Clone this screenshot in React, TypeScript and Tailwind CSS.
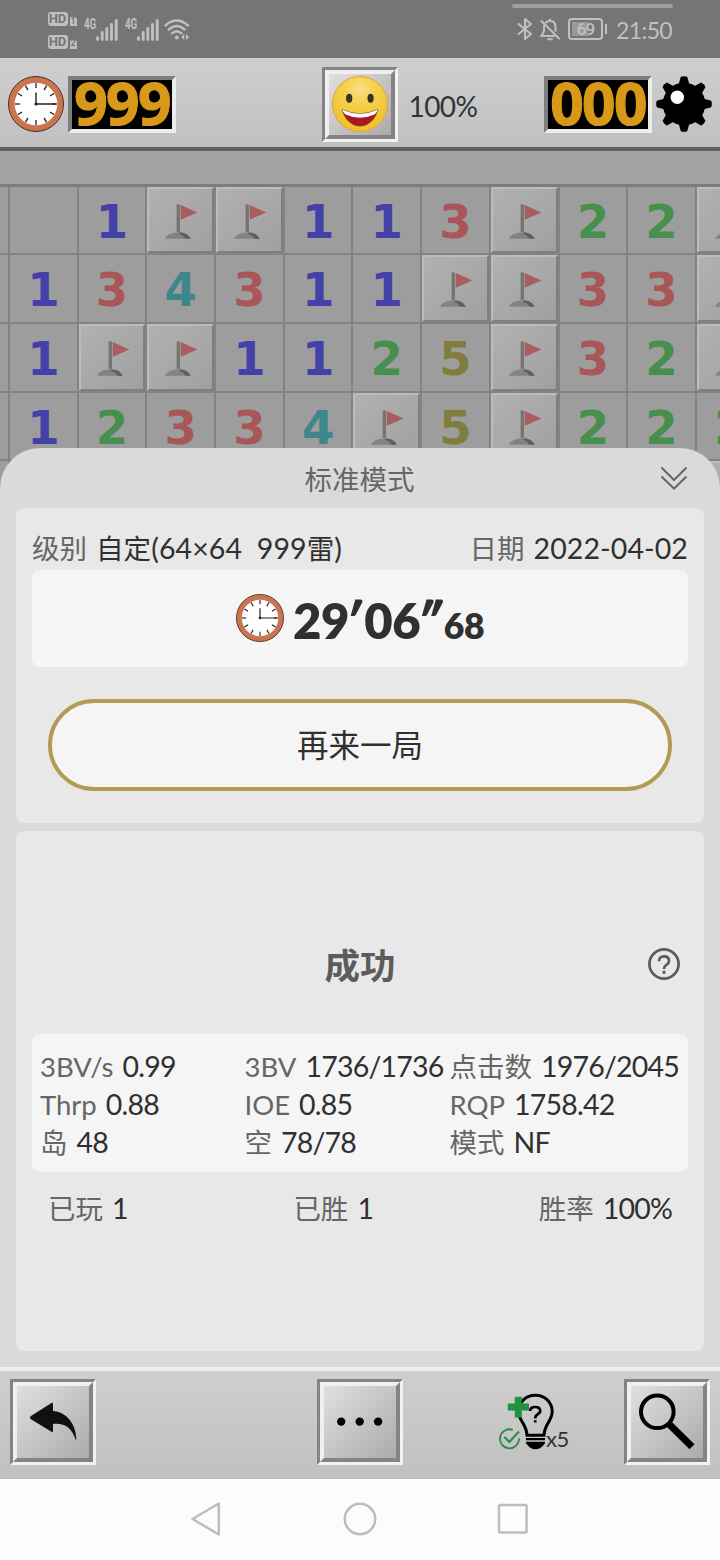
import type { ReactNode } from "react";

type Cell = "" | "F" | "1" | "2" | "3" | "4" | "5";

const BOARD: Cell[][] = [
  ["", "", "1", "F", "F", "1", "1", "3", "F", "2", "2", "F"],
  ["", "1", "3", "4", "3", "1", "1", "F", "F", "3", "3", "F"],
  ["", "1", "F", "F", "1", "1", "2", "5", "F", "3", "2", "F"],
  ["", "1", "2", "3", "3", "4", "F", "5", "F", "2", "2", "2"],
  ["", "", "", "", "", "", "", "", "", "", "", "F"],
];

const DIGIT_COLOR: Record<string, string> = {
  "1": "text-[#4340a8]",
  "2": "text-[#468f4c]",
  "3": "text-[#a85658]",
  "4": "text-[#3f858c]",
  "5": "text-[#807d3e]",
};

const STATS = [
  ["3BV/s", "0.99"], ["3BV", "1736/1736"], ["点击数", "1976/2045"],
  ["Thrp", "0.88"], ["IOE", "0.85"], ["RQP", "1758.42"],
  ["岛", "48"], ["空", "78/78"], ["模式", "NF"],
];

function Clock({ className }: { className: string }) {
  return (
    <svg viewBox="0 0 56 56" className={className}>
      <circle cx="28" cy="28" r="27.5" fill="#cb7450" stroke="#4a2f28" strokeWidth="1" />
      <circle cx="28" cy="28" r="21.3" fill="#fff" />
      {[0, 1, 2, 3, 4, 5, 6, 7, 8, 9, 10, 11].map((n) => (
        <path key={n} d="M28 7v5" stroke="#222" strokeWidth="1.3" transform={`rotate(${n * 30} 28 28)`} />
      ))}
      <path d="M28 16.5V28H48" fill="none" stroke="#222" strokeWidth="1.4" />
      <circle cx="28" cy="28" r="1.6" fill="#222" />
    </svg>
  );
}

function Mine() {
  return (
    <svg viewBox="0 0 56 56" className="h-14 w-14">
      <circle cx="28" cy="28" r="21.3" />
      {[0, 1, 2, 3, 4, 5, 6, 7].map((n) => (
        <path key={n} d="M22.5 9L24.8 0.8Q28 -0.4 31.2 0.8L33.5 9Z" transform={`rotate(${n * 45} 28 28)`} />
      ))}
      <circle cx="21.3" cy="21.3" r="6.7" fill="#fff" />
    </svg>
  );
}

function Counter({ value }: { value: string }) {
  return (
    <div className="h-[57px] w-[108px] border-4 border-t-[#7e7e7e] border-r-[#ececec] border-b-[#ececec] border-l-[#7e7e7e] bg-black text-center">
      <span className="-mt-[17.5px] block font-['Noto_Sans'] text-[58.5px] leading-[80px] font-bold tracking-[-1.6px] text-[#d8981a] [-webkit-text-stroke:1.2px_#d8981a]">{value}</span>
    </div>
  );
}

function BevelButton({ className, children }: { className: string; children: ReactNode }) {
  return (
    <button className={`${className} shrink-0 border-[3px] border-t-[#848484] border-r-[#f2f2f2] border-b-[#f2f2f2] border-l-[#848484]`}>
      <span className="flex h-full w-full items-center justify-center border-4 border-t-[#f0f0f0] border-r-[#848484] border-b-[#848484] border-l-[#f0f0f0] bg-linear-to-br from-[#e0e0e0] to-[#ababab]">
        {children}
      </span>
    </button>
  );
}

function Smiley() {
  return (
    <svg viewBox="0 0 58 58" className="h-[58px] w-[58px] shrink-0">
      <defs>
        <radialGradient id="face" cx="50%" cy="24%" r="70%">
          <stop offset="0" stopColor="#fae08c" />
          <stop offset="0.4" stopColor="#f4d04a" />
          <stop offset="1" stopColor="#eec22c" />
        </radialGradient>
      </defs>
      <circle cx="29" cy="29" r="27.6" fill="url(#face)" stroke="#e2a244" strokeWidth="1" />
      <ellipse cx="18.2" cy="23.2" rx="3.1" ry="4.5" fill="#3a3320" />
      <ellipse cx="39.6" cy="23.2" rx="3.1" ry="4.5" fill="#3a3320" />
      <path d="M11 34.5Q29 43 47 34.5C44 45 37 51 29 51S14 45 11 34.5Z" fill="#ad1524" stroke="#6b4a1c" strokeWidth="0.8" />
      <path d="M11 34.5Q29 43 47 34.5Q46 37.5 43.6 39.5Q29 46 14.5 39.5Q12 37.5 11 34.5Z" fill="#fff" />
    </svg>
  );
}

function Flag() {
  return (
    <svg viewBox="0 0 66.7 66.7" className="h-[66.7px] w-[66.7px] shrink-0">
      <path d="M33.7 18L50.4 25.5L33.7 32.7Z" fill="#a85d5e" />
      <path d="M18.2 51.8C20 46.5 28 45.3 33 45.6C38 45.3 42 48 43.7 51.8Z" fill="#83837f" />
      <path d="M32 45.5C38 45.3 42 48 43.7 51.8H38.5Q36 48 32 46.5Z" fill="#5f5f5d" />
      <path d="M29.7 17.5H32.8V44.8H29.7Z" fill="#696966" />
      <path d="M31 18V44.6" stroke="#85857f" strokeWidth="0.8" />
    </svg>
  );
}

function Tile({ cell }: { cell: Cell }) {
  return (
    <div className="flex overflow-hidden border-r-2 border-b-2 border-[#838383]">
      {cell === "F" ? (
        <div className="flex h-full w-full items-center justify-center overflow-hidden border-t-[2.5px] border-r-2 border-b-2 border-l-[2.5px] border-t-[#bcbcbc] border-r-[#7f7f7f] border-b-[#7f7f7f] border-l-[#bcbcbc] bg-linear-to-br from-[#b1b1b1] to-[#a0a0a0]">
          <Flag />
        </div>
      ) : (
        <span className={`w-full pt-[2px] text-center font-['DejaVu_Sans'] text-[46.6px] leading-[66px] font-bold ${DIGIT_COLOR[cell] ?? ""}`}>{cell}</span>
      )}
    </div>
  );
}

function Label({ children }: { children: ReactNode }) {
  return <span className="mr-[9px] text-[27.5px] text-[#666]">{children}</span>;
}

function Value({ children, wide }: { children: ReactNode; wide?: boolean }) {
  return <span className={`text-[28.5px] text-[#303030] ${wide ? "tracking-[0.1px]" : "tracking-[-0.8px]"}`}>{children}</span>;
}

function HdBadge({ slot }: { slot: string }) {
  return (
    <div className="flex h-[14px] items-end gap-[2px]">
      <span className="flex h-[14px] w-5 items-center justify-center rounded-[3px] bg-[#c0c0c0] font-['Roboto'] text-[13px] font-bold text-[#757575]">HD</span>
      <span className="flex h-[9px] w-[7px] items-center justify-center rounded-tr-[3px] bg-[#c0c0c0] font-['Roboto'] text-[9px] font-bold text-[#757575]">{slot}</span>
    </div>
  );
}

function Signal() {
  return (
    <div className="flex h-[22px] w-[41px]">
      <span className="h-3 w-3 origin-left scale-x-70 font-['Roboto'] text-[14px] leading-[10px] font-bold">4G</span>
      <svg viewBox="0 0 22 22" className="h-[22px] w-[22px]">
        <path d="M1.5 20.5V18.8M6.2 20.5V13.5M10.8 20.5V9.5M15.5 20.5V5.5M20.2 20.5V1.5" stroke="currentColor" strokeWidth="2.9" strokeLinecap="round" />
      </svg>
    </div>
  );
}

function StatusBar() {
  return (
    <div className="relative flex h-[58px] shrink-0 bg-[#757575] text-[#c0c0c0]">
      <div className="flex w-full items-start justify-between pr-[47px] pl-[47.5px]">
        <div className="flex pt-[12px]">
          <div className="flex w-[36.5px] flex-col gap-[8.5px]">
            <HdBadge slot="1" />
            <HdBadge slot="2" />
          </div>
          <div className="flex pt-[7px]">
            <Signal />
            <Signal />
            <svg viewBox="0 0 26 22" className="-ml-[2px] h-[22px] w-[26px]" fill="none" stroke="currentColor" strokeWidth="2.4" strokeLinecap="round">
              <path d="M1.5 6.5Q12.5 -3.5 24 6.5" />
              <path d="M4.8 10.5Q12.8 3.5 20.6 10.5" />
              <path d="M8 14.3Q12.8 10 17.5 14.3" />
              <circle cx="12.8" cy="18.5" r="2" fill="currentColor" stroke="none" />
              <path d="M20.3 15V21L17 18ZM22 15V21L25.3 18Z" fill="currentColor" stroke="none" />
            </svg>
          </div>
        </div>
        <div className="flex h-[41px] items-end">
          <svg viewBox="0 0 16 24" className="mr-[7px] h-6 w-4" fill="none" stroke="currentColor" strokeWidth="2.1" strokeLinejoin="round" strokeLinecap="round">
            <path d="M1.5 7L14 17L8 22V2L14 7L1.5 17" />
          </svg>
          <svg viewBox="0 0 20 24" className="mr-[8px] h-6 w-5" fill="none" stroke="currentColor" strokeWidth="2" strokeLinecap="round">
            <path d="M1.5 4L19 21.5M6 5.5Q7.5 3.8 10 4M10 2.5V4Q15.5 4 15.5 10V14M4 8.5V14L1.5 19H14M8 22.2H12" />
          </svg>
          <div className="mb-[1px] flex items-center gap-[2px]">
            <div className="flex h-[22px] w-[35px] items-center justify-center rounded-[4px] border-2 border-[#c0c0c0] p-[2px]">
              <span className="flex h-full w-full items-center justify-center bg-linear-to-r from-[#999] from-60% to-transparent to-60% pt-px font-['Roboto'] text-[17px] font-medium tracking-[-1px]">69</span>
            </div>
            <div className="h-[10px] w-[2px] bg-[#c0c0c0]" />
          </div>
          <span className="mb-[-1px] ml-[9px] w-[57px] font-['Lato'] text-[23px] leading-[24px] tracking-[-0.6px]">21:50</span>
        </div>
      </div>
      <div className="absolute top-1 right-[47px] h-1 w-[161px] rounded-full bg-[#9f9f9f]" />
    </div>
  );
}

function GameHeader() {
  return (
    <div className="flex h-[93px] shrink-0 items-center border-b-4 border-[#606060] bg-linear-to-b from-[#cfcfcf] to-[#c0c0c0] px-2 pt-[3px]">
      <Clock className="mr-1 h-14 w-14" />
      <Counter value="999" />
      <BevelButton className="ml-[146px] h-[75px] w-[75.5px]"><Smiley /></BevelButton>
      <span className="ml-[11px] flex-1 pt-[3px] font-['Lato'] text-[28px] tracking-[-0.6px] text-[#333]">100%</span>
      <Counter value="000" />
      <div className="ml-1"><Mine /></div>
    </div>
  );
}

// taller than its slot: it keeps going under the sheet's rounded corners
function Board() {
  return (
    <div className="-mb-12 h-[345px] shrink-0 overflow-hidden bg-[#9d9d9d]">
      <div className="h-[35.7px] border-b-[3.5px] border-[#7c7c7c] bg-[#a3a3a3]" />
      <div className="grid auto-rows-[68.7px] grid-cols-[10px_repeat(11,68.7px)]">
        {BOARD.flatMap((row, y) => row.map((cell, x) => <Tile key={`${y}-${x}`} cell={cell} />))}
      </div>
    </div>
  );
}

function ResultSheet() {
  return (
    <div className="relative z-10 flex h-[919px] shrink-0 flex-col rounded-t-[40px] bg-[#dadada] px-4">
      <div className="flex h-[60px] items-center justify-center text-[27.5px] text-[#666]">
        <span className="flex-1 pt-[3px] pl-[39px] text-center">标准模式</span>
        <svg viewBox="0 0 28 24" className="mr-4 -ml-1 h-6 w-7" fill="none" stroke="#666" strokeWidth="2">
          <path d="M1.5 1.5L14 14L26.5 1.5M1.5 10.5L14 22.5L26.5 10.5" />
        </svg>
      </div>

      <div className="h-[315px] rounded-lg bg-[#e8e8e8] px-4">
        <div className="flex h-[62px] items-end justify-between whitespace-pre">
          <div className="flex items-baseline"><Label>级别</Label><Value wide><span className="text-[27.5px]">自定</span>(64×64  999<span className="text-[27.5px]">雷</span>)</Value></div>
          <div className="flex items-baseline"><Label>日期</Label><Value wide>2022-04-02</Value></div>
        </div>
        <div className="flex h-[97px] items-center justify-center rounded-lg bg-[#f5f5f5] text-[#303030]">
          <Clock className="mr-[9px] mb-px h-12 w-12" />
          <div className="flex items-baseline pt-[5px] font-['Lato'] text-[49px] font-extrabold tracking-[-0.5px]">
            <span>29</span><span className="-ml-[4px] mr-[4px] italic">′</span><span>06</span><span className="-ml-[4px] mr-[3px] italic">″</span>
            <span className="text-[35.5px]">68</span>
          </div>
        </div>
        <button className="mx-4 mt-8 block h-[92px] w-[624px] rounded-full border-4 border-[#b09b57] bg-[#f5f5f5] pt-[2px] text-[31.5px] text-[#303030]">再来一局</button>
      </div>

      <div className="mt-[7.5px] h-[520.5px] rounded-lg bg-[#e8e8e8] px-4 pt-[98px]">
        <div className="flex h-[72px] items-center pl-10">
          <span className="flex-1 pt-[3px] text-center text-[35.5px] font-bold text-[#5c5c5c]">成功</span>
          <svg viewBox="0 0 32 32" className="mr-2 mb-px h-8 w-8" fill="none" stroke="#5c5c5c" strokeWidth="2.7">
            <circle cx="16" cy="16" r="14.6" />
            <path d="M11 13.2Q11 8.4 16 8.4T21 13Q21 15.2 18.4 16.8Q16 18.4 16 21" />
            <path d="M16 22.7V25.8" />
          </svg>
        </div>
        <div className="mt-[33.5px] grid h-[138px] auto-rows-[38px] grid-cols-[204.5px_205px_1fr] rounded-lg bg-[#f5f5f5] pt-[13px] pl-2 whitespace-nowrap">
          {STATS.map(([label, value]) => (
            <div key={label} className="flex h-[38px] items-baseline leading-[38px]"><Label>{label}</Label><Value>{value}</Value></div>
          ))}
        </div>
        <div className="flex h-[72px] items-center justify-between px-4 pt-px">
          <div className="flex items-baseline"><Label>已玩</Label><Value>1</Value></div>
          <div className="flex items-baseline"><Label>已胜</Label><Value>1</Value></div>
          <div className="flex items-baseline"><Label>胜率</Label><Value>100%</Value></div>
        </div>
      </div>
    </div>
  );
}

function HintButton() {
  return (
    <button className="ml-[95px] flex h-[60px] w-[74px] shrink-0">
      <svg viewBox="498 1392 58 60" className="h-[60px] w-[58px] shrink-0">
        <path d="M527 1435.2C526.5 1423.5 518.6 1421 518.6 1411.5C518.6 1402 526 1395.3 535.3 1395.3S552.2 1402 552.2 1411.5C552.2 1421 544.5 1423.5 544 1435.2Z" fill="none" stroke="#000" strokeWidth="3" />
        <path d="M526 1438H545V1440.2H526ZM526 1441.8H545V1443.2Q541 1449.2 535.5 1449.2T526 1443.2Z" />
        <path d="M530.2 1411Q530.2 1407 535.2 1407T540.2 1411Q540.2 1413 537.6 1414.3Q535.2 1415.8 535.2 1418.5M535.2 1420.2V1422.5" fill="none" stroke="#000" strokeWidth="2.7" />
        <path d="M514.8 1396.7H521.8V1403.6H529V1410.6H521.8V1417.4H514.8V1410.6H507.8V1403.6H514.8Z" fill="#20933f" />
        <path d="M512.8 1429.9A9.5 9.5 0 1 0 519 1438.2" fill="none" stroke="#2b8a45" strokeWidth="1.8" />
        <path d="M504.5 1437L509.3 1442L519 1431.5" fill="none" stroke="#2b8a45" strokeWidth="2.2" />
      </svg>
      <span className="mt-[35px] -ml-[10px] h-6 font-['Lato'] text-[22px] leading-6 tracking-[-0.5px] text-[#333]">x5</span>
    </button>
  );
}

function Toolbar() {
  return (
    <div className="flex h-[111.5px] shrink-0 border-t-4 border-[#efefef] bg-linear-to-b from-[#cfcfcf] to-[#c0c0c0] pt-2 pl-[10px]">
      <BevelButton className="h-[85.5px] w-[86px]">
        <svg viewBox="17 1386 72 72" className="h-[72px] w-[72px] shrink-0">
          <path d="M30.6 1416.3L51.5 1403Q53 1402.2 53 1404V1411C66 1412 76 1423 76.3 1439.5H75.5C72 1427 63 1422.5 53 1424V1431Q53 1432.6 51.5 1431.8L30.6 1419Q29.2 1417.7 30.6 1416.3Z" fill="#111" />
        </svg>
      </BevelButton>
      <BevelButton className="ml-[221px] h-[85.5px] w-[86px]">
        <svg viewBox="0 0 72 72" className="h-[72px] w-[72px] shrink-0">
          <circle cx="17.2" cy="35.6" r="4.2" />
          <circle cx="35.7" cy="35.6" r="4.2" />
          <circle cx="54.1" cy="35.6" r="4.2" />
        </svg>
      </BevelButton>
      <div className="mt-[13px]"><HintButton /></div>
      <BevelButton className="ml-[52px] h-[85.5px] w-[86px]">
        <svg viewBox="631 1386 72 72" className="h-[72px] w-[72px] shrink-0" fill="none" stroke="#000">
          <circle cx="657.3" cy="1411.8" r="16.3" strokeWidth="4" />
          <path d="M669.2 1424.2L692 1446.7" strokeWidth="7" />
        </svg>
      </BevelButton>
    </div>
  );
}

function NavBar() {
  return (
    <div className="flex flex-1 items-center bg-[#fcfcfc] text-[#bdbdbd]">
      <svg viewBox="0 0 32 34" className="ml-[190px] h-[34px] w-8" fill="none" stroke="currentColor" strokeWidth="2.5" strokeLinejoin="round">
        <path d="M2.5 17L28.8 1.5V32.5Z" />
      </svg>
      <svg viewBox="0 0 34 34" className="ml-[121px] h-[34px] w-[34px]" fill="none" stroke="currentColor" strokeWidth="2.5">
        <circle cx="17" cy="17" r="15.2" />
      </svg>
      <svg viewBox="0 0 32 34" className="ml-[119.5px] h-[34px] w-8" fill="none" stroke="currentColor" strokeWidth="2.5">
        <rect x="2" y="3" width="27.6" height="27.6" rx="1.5" />
      </svg>
    </div>
  );
}

export default function App() {
  return (
    <div className="flex h-[1560px] w-[720px] flex-col overflow-hidden bg-[#9d9d9d] font-['Lato','Noto_Sans_CJK_SC',sans-serif]">
      <StatusBar />
      <GameHeader />
      <Board />
      <ResultSheet />
      <Toolbar />
      <NavBar />
    </div>
  );
}
